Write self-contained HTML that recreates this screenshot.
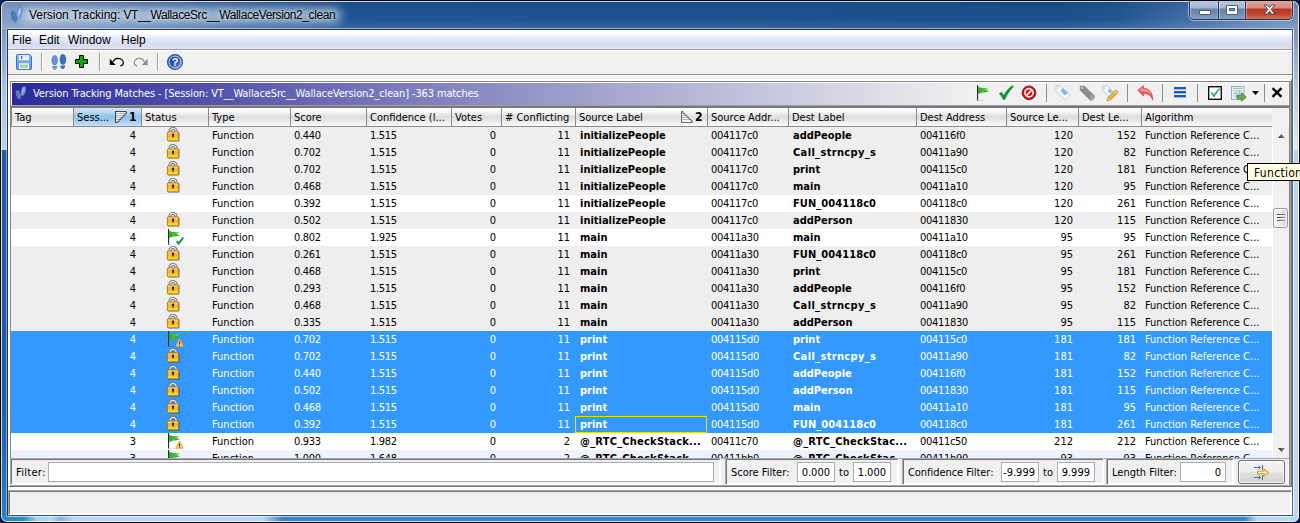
<!DOCTYPE html>
<html><head><meta charset="utf-8"><title>Version Tracking</title>
<style>
html,body{margin:0;padding:0}
body{width:1300px;height:523px;overflow:hidden;background:#0a2050;position:relative;
 font-family:"DejaVu Sans Condensed","DejaVu Sans","Liberation Sans",sans-serif;font-stretch:condensed;font-size:11px;color:#000;}
div,span,svg{position:absolute;box-sizing:border-box}
.win{left:0;top:0;width:1300px;height:523px;border-radius:7px;border:1px solid #05080f;overflow:hidden;background:#1f5aa2}
.win>div,.win>svg{margin:-1px 0 0 -1px}
.tb{left:1px;top:1px;width:1298px;height:149px;background:linear-gradient(90deg,#86a2c9 0,#7a98c4 30px,#5c83b6 130px,#34659f 250px,#1f5595 345px,#1d5391 560px,#1b508d 1060px,#245893 1120px,#4572ab 1200px,#698bb9 1260px,#7192bd 1298px)}
.tbv{left:1px;top:1px;width:1298px;height:28px;background:linear-gradient(rgba(10,30,70,.18) 0,rgba(10,30,70,.05) 8px,rgba(255,255,255,0) 18px,rgba(255,255,255,.12) 28px)}
.fl2{left:1px;top:150px;width:7px;height:372px;background:linear-gradient(#1f5aa2 0,#1f5ca6 250px,#2a7fbd 372px)}
.fl1{left:1px;top:29px;width:7px;height:121px;background:linear-gradient(#7d9bc5 0,#a9c2e2 60px,#bcd0ea 121px)}
.fr1{left:1292px;top:29px;width:7px;height:121px;background:linear-gradient(#7393be 0,#b5cbe8 60px,#dce9f8 121px)}
.fr2{left:1292px;top:150px;width:7px;height:372px;background:linear-gradient(#b0d2f8 0,#b6d8fc 200px)}
.frb{left:1px;top:515px;width:1298px;height:7px;background:linear-gradient(90deg,#2a8ac0 0,#2d8cc4 22px,#a8d2f8 36px,#b4d8fc 50px,#86b2e2 60px,#b4d8fc 72px,#b4d8fc 262px,#3a82cc 282px,#3a82cc 1243px,#b4d8fc 1256px,#b4d8fc 1298px)}
.hlo{left:1px;top:1px;width:1298px;height:521px;border-radius:6px;border:1px solid rgba(255,255,255,.78)}
.hli{left:6px;top:28px;width:1288px;height:489px;border-radius:2px;border:1px solid;border-color:rgba(255,255,255,.45) rgba(255,255,255,.85) rgba(255,255,255,.6) rgba(255,255,255,.45)}
.glow{left:20px;top:8px;width:322px;height:15px;border-radius:8px;background:rgba(255,255,255,.5);filter:blur(5px)}
.ttl{left:29px;top:8px;font:12px "Liberation Sans",sans-serif;white-space:nowrap;color:#000;letter-spacing:-0.28px;text-shadow:0 0 4px rgba(255,255,255,.7),0 0 8px rgba(255,255,255,.5)}
.cl{left:7px;top:29px;width:1286px;height:487px;border:1px solid;border-color:#28354d #566270 #3d4c62 #1f3354;background:#f0f0f0;overflow:hidden}
/* everything inside .ci is in page coords minus (8,30)... use wrapper that restores page coords */
.pg{left:-8px;top:-30px;width:1300px;height:523px}
.menu{left:8px;top:29px;width:1284px;height:20px;background:linear-gradient(#fff 0,#fdfdff 5px,#e4e8f6 9px,#d6dbef 17px,#dfe3f3 20px)}
.menu span{top:4px;font:12px "Liberation Sans",sans-serif;position:absolute}
.l1{left:8px;width:1284px;height:1px}
.sep2{width:1px;height:18px;top:84px;background:#8f8f8f}
.sep{width:2px;height:18px;top:53px;border-left:1px solid #a0a0a0;border-right:1px solid #fff}
.ph{left:12px;top:83px;width:1276px;height:22px;background:linear-gradient(90deg,#29299a 0,#f0f0f0 956px)}
.pht{left:33px;top:87px;color:#fff;white-space:nowrap;letter-spacing:-0.13px}
.hd{left:11px;top:108px;width:1261px;height:19px;background:linear-gradient(#fff 0,#f6f6f6 4px,#dcdcdc 9px,#eeeeee 14px,#fafafa 18px);border-bottom:1px solid #8c8c8c}
.h{top:0;height:18px;border-left:1px solid #8a8a8a;overflow:hidden}
.h .ht{left:3px;top:3px;white-space:nowrap}
.hs{background:linear-gradient(#d2e7f9 0,#b9d9f4 4px,#8ec1eb 9px,#add2f2 14px,#c6e0f7 18px)}
.sn{font-weight:bold;font-size:12px;top:2px}
.sort1{left:41px;top:3px}.sort2{left:105px;top:3px}
.tv{left:11px;top:127px;width:1261px;height:331px;background:#fff;overflow:hidden}
.row{left:0;width:1261px;height:17px}
.rg{background:#eeeeee}.rw{background:#fff}.ra{background:#edf3fe}.rs{background:#3399ff;color:#fff}
.c{top:0;height:17px;line-height:17px;padding-left:4px;white-space:nowrap;overflow:hidden}
.c.r{text-align:right;padding-right:5px;padding-left:0}
.c.b{font-weight:bold;padding-left:5px}.c.n{letter-spacing:-.3px}
.c.ctr{padding:0}.c.ctr .ic{left:27px;top:0}.c.ctr .ic.lk{left:24px}
.c.foc{border:1px solid #e2e200;line-height:15px;padding-left:4px}
.vs{left:1272px;top:127px;width:17px;height:331px;background:linear-gradient(90deg,#fff 0,#fff 1px,#f0f0f0 1px)}
.inp{background:#fff;border:1px solid #abadb3;height:20px;top:462px;line-height:18px;padding-top:1px;text-align:right;padding-right:4px}
.lbl{top:466px;line-height:14px;white-space:nowrap}
.bevl{border:1px solid;border-color:#a8a8a8 #fff #fff #a8a8a8;box-shadow:inset 1px 1px 0 #757575,inset -1px -1px 0 #fff}
.bevr{border:1px solid;border-color:#fff #757575 #757575 #fff;box-shadow:inset 1px 1px 0 #fff,inset -1px -1px 0 #a8a8a8}
.etch{border:1px solid #a0a0a0;box-shadow:inset 1px 1px 0 #fff,1px 1px 0 #fff}
</style></head><body>
<svg width="0" height="0" style="position:absolute">
 <linearGradient id="gl" x1="0" y1="0" x2="0" y2="1"><stop offset="0" stop-color="#f6c24a"/><stop offset=".5" stop-color="#f8b326"/><stop offset=".78" stop-color="#fdd421"/><stop offset="1" stop-color="#ffe326"/></linearGradient>
 <linearGradient id="gf" x1="0" y1="0" x2="1" y2="0"><stop offset="0" stop-color="#2fa521"/><stop offset=".6" stop-color="#4fc63a"/><stop offset="1" stop-color="#7fe060"/></linearGradient>
</svg>
<div class="win">
 <div class="tb"></div><div class="tbv"></div><div class="glow"></div><div class="fl1"></div><div class="fl2"></div><div class="fr1"></div><div class="fr2"></div><div class="frb"></div><div class="hlo"></div><div class="hli"></div>
 <svg style="left:9px;top:6px" width="16" height="18" viewBox="0 0 16 18"><ellipse cx="5" cy="10.300" rx="2.300" ry="5.600" transform="rotate(-16 5 10.300)" fill="#4d7cbb" stroke="#3f6fb0" stroke-width=".7"/><ellipse cx="10.300" cy="6.800" rx="2.200" ry="5.700" transform="rotate(14 10.300 6.800)" fill="#8fb2df" stroke="#5585c4" stroke-width=".9"/><ellipse cx="10.600" cy="5.800" rx=".9" ry="3.200" transform="rotate(14 10.600 5.800)" fill="#b5d0f0"/></svg>
 <div class="ttl"><span style="position:static;letter-spacing:-0.05px">Version Tracking: </span><span style="position:static;letter-spacing:-0.4px">VT__WallaceSrc__WallaceVersion2_clean</span></div>
 <!-- caption buttons -->
 <div style="left:1189px;top:0;width:104px;height:20px;border:1px solid #27344e;border-top:none;border-radius:0 0 5px 5px;overflow:hidden;box-shadow:0 0 0 1px rgba(255,255,255,.5)">
  <div style="left:0;top:0;width:29px;height:19px;background:linear-gradient(#bccbdf 0,#a3b8d2 8px,#6482a8 9px,#6f8db3 14px,#88a3c5 19px);border-right:1px solid #27344e;box-shadow:inset 1px 0 0 rgba(255,255,255,.4),inset -1px 0 0 rgba(255,255,255,.25)"></div>
  <div style="left:29px;top:0;width:27px;height:19px;background:linear-gradient(#bccbdf 0,#a3b8d2 8px,#6482a8 9px,#6f8db3 14px,#88a3c5 19px);border-right:1px solid #27344e;box-shadow:inset 1px 0 0 rgba(255,255,255,.4),inset -1px 0 0 rgba(255,255,255,.25)"></div>
  <div style="left:56px;top:0;width:46px;height:19px;background:linear-gradient(#e0aaa0 0,#d48b7f 8px,#ba3823 9px,#b93c27 13px,#cf7459 19px);box-shadow:inset 1px 0 0 rgba(255,255,255,.35),inset -1px 0 0 rgba(255,255,255,.3)"></div>
  <div style="left:9px;top:10px;width:12px;height:5px;background:#fff;border:1px solid #535e72;border-radius:1px"></div>
  <div style="left:36px;top:5px;width:12px;height:10px;background:#fff;border:1px solid #535e72;border-radius:1px"></div>
  <div style="left:39px;top:8px;width:6px;height:3px;background:#6b87ab;border:1px solid #535e72"></div>
  <svg style="left:73px;top:4px" width="13" height="12" viewBox="0 0 13 12"><path d="M1 1h3.200l2.300 2.600 2.300-2.600h3.200l-3.900 4.400 3.900 4.600h-3.200l-2.300-2.800-2.300 2.800h-3.200l3.900-4.600z" fill="#fff" stroke="#4d4a55" stroke-width="1" stroke-linejoin="round"/></svg>
 </div>
 <div class="cl"><div class="pg">
  <div class="menu"><span style="left:4px">File</span><span style="left:31px">Edit</span><span style="left:60px">Window</span><span style="left:113px">Help</span></div>
  <div class="l1" style="top:49px;background:#a0a0a0"></div>
  <div class="l1" style="top:50px;background:#fff"></div>
  <div class="l1" style="top:74px;background:#8e8e8e"></div>
  <div class="l1" style="top:75px;background:#fff"></div>
  <!-- toolbar icons -->
  <svg style="left:16px;top:54px" width="16" height="16" viewBox="0 0 16 16"><linearGradient id="gs" x1="0" y1="0" x2="0" y2="1"><stop offset="0" stop-color="#8ab4ee"/><stop offset="1" stop-color="#5e93e2"/></linearGradient><path d="M1.500 .5h12l2 2v12a1 1 0 0 1-1 1h-13a1 1 0 0 1-1-1v-13a1 1 0 0 1 1-1z" fill="url(#gs)" stroke="#3a74d0"/><rect x="2.800" y="1" width="10.200" height="5.300" fill="#e6effc"/><rect x="5" y="2" width="1.300" height="3" fill="#3d6fc0"/><rect x="3" y="9.300" width="10" height="5.700" fill="#fff"/><rect x="4" y="10.700" width="8" height="1.200" fill="#7cc05a"/><rect x="4" y="12.600" width="8" height="1.200" fill="#7cc05a"/></svg>
  <div class="sep" style="left:41px"></div>
  <svg style="left:51px;top:54px" width="16" height="16" viewBox="0 0 16 16"><ellipse cx="3.700" cy="6.200" rx="3.200" ry="5.200" fill="#6394d4"/><path d="M1.200 12h5c0 2.100-1 3.800-2.500 3.800s-2.500-1.700-2.500-3.800z" fill="#6394d4"/><ellipse cx="11.900" cy="5.400" rx="3.200" ry="5.400" fill="#3a6db6"/><path d="M9.400 11.400h4.800c0 2-1 3.600-2.400 3.600s-2.400-1.600-2.400-3.600z" fill="#3a6db6"/></svg>
  <svg style="left:74px;top:54px" width="16" height="16" viewBox="0 0 16 16"><path d="M5.500 1.500h4v4h4v4h-4v4h-4v-4h-4v-4h4z" fill="#12a312" stroke="#000" stroke-width="1" stroke-linejoin="miter"/></svg>
  <div class="sep" style="left:99px"></div>
  <svg style="left:109px;top:54px" width="16" height="16" viewBox="0 0 16 16"><path d="M4 7.800c1-2 3-3.600 5.300-3.400 3 .3 5.200 2.300 5 4.600-.1 1.500-1.200 2.600-2.800 3" fill="none" stroke="#000" stroke-width="1.300"/><path d="M.8 4.800v6.200h5.900z" fill="#000"/></svg>
  <svg style="left:133px;top:54px" width="16" height="16" viewBox="0 0 16 16"><path d="M11.500 7.800c-1-2-3-3.600-5.300-3.400-3 .3-5.200 2.300-5 4.600.1 1.500 1.200 2.600 2.800 3" fill="none" stroke="#8a8a8a" stroke-width="1.300"/><path d="M14.700 4.800v6.200h-5.900z" fill="#8a8a8a"/></svg>
  <div class="sep" style="left:157px"></div>
  <svg style="left:167px;top:54px" width="16" height="16" viewBox="0 0 16 16"><linearGradient id="gh" x1="0" y1="0" x2="1" y2="1"><stop offset="0" stop-color="#163f8c"/><stop offset=".55" stop-color="#2c5cab"/><stop offset="1" stop-color="#6f9bd8"/></linearGradient><circle cx="8" cy="8" r="7.600" fill="url(#gh)" stroke="#1d4690" stroke-width=".8"/><circle cx="8" cy="8" r="6" fill="none" stroke="#e3ecf9" stroke-width=".9"/><text x="8" y="12" font-family="Liberation Sans,sans-serif" font-weight="bold" font-size="11" text-anchor="middle" fill="#fff">?</text></svg>

  <!-- provider panel -->
  <div class="bevr" style="left:8px;top:79px;width:1284px;height:408px"></div>
  <div style="left:10px;top:81px;width:1280px;height:404px;border:1px solid #828282;border-bottom:none;box-shadow:inset 1px 1px 0 #fff,inset -1px 0 0 #fff"></div>
  <div class="ph"></div>
  <svg style="left:14px;top:85px" width="14" height="16" viewBox="0 0 16 18"><ellipse cx="5" cy="10.800" rx="2.300" ry="5.200" transform="rotate(-16 5 10.800)" fill="#5e80b4" stroke="#5374aa" stroke-width=".7"/><ellipse cx="10.600" cy="6.800" rx="2.200" ry="5.400" transform="rotate(14 10.600 6.800)" fill="#7d9dcb" stroke="#6586ba" stroke-width=".9"/><ellipse cx="10.900" cy="5.800" rx=".8" ry="3" transform="rotate(14 10.900 5.800)" fill="#9ab6dc"/></svg>
  <div class="pht">Version Tracking Matches - [Session: VT__WallaceSrc__WallaceVersion2_clean] -363 matches</div>

  <svg style="left:977px;top:85px" width="16" height="16" viewBox="0 0 16 16"><rect x="0" y="0" width="1.100" height="15.500" fill="#2a2a2a"/><path d="M1.100 1.800C4.500 3.200 8 3.300 12 3.200L8.300 5.400 12 6.600C8 7.300 4.500 7.800 1.100 9z" fill="url(#gf)"/><path d="M7 5.900l2.300-.9 2.700 1.600c-1.800.3-3.400.5-5 .8z" fill="#1e8a1a" opacity=".55"/><rect x="1.100" y="15" width="7" height=".6" fill="rgba(0,0,0,.18)"/></svg>
  <svg style="left:998px;top:85px" width="17" height="16" viewBox="0 0 17 16"><path d="M1.300 8.600l2.200-1.300 2.200 3.200c2.300-4 5-7.300 8.600-10l1.200 1.200c-3.800 3.600-6.400 7.600-8.800 12.800h-1.500c-1-2.300-2.200-4.200-3.900-5.900z" fill="#089a2e" stroke="#067a24" stroke-width=".5"/></svg>
  <svg style="left:1021px;top:85px" width="16" height="16" viewBox="0 0 16 16"><circle cx="8" cy="7.800" r="6.900" fill="#c01818" stroke="#8e0c0c" stroke-width=".8"/><circle cx="8" cy="7.800" r="4.100" fill="none" stroke="#f4dede" stroke-width="1.700"/><path d="M5 10.800L11 4.800" stroke="#f4dede" stroke-width="1.700"/></svg>
  <div class="sep2" style="left:1046px"></div>
  <svg style="left:1055px;top:85px" width="16" height="16" viewBox="0 0 16 16"><path d="M1 .8h4.200l9.600 9.200-4.600 5-9.200-9.600z" fill="#fdfdfd" stroke="#b9bfc9" stroke-width=".9"/><path d="M5.300 5.800l3-2.600 4.600 4.600-3 2.800z" fill="#79b9f0"/><circle cx="3" cy="3" r=".9" fill="#c8ccd4"/></svg>
  <svg style="left:1079px;top:85px" width="17" height="17" viewBox="0 0 17 17"><path d="M.8 .8h4.600l10.200 9.600c.6 2.400-1.400 5-4.400 5.200l-10.400-10.400z" fill="#8d8d8d"/><path d="M11 10.500c2-.5 3.800.2 4.600 1.200.2 2-1.600 3.800-4.400 3.900z" fill="#a2a2a2"/><circle cx="3" cy="3" r="1" fill="#e0e0e0"/></svg>
  <svg style="left:1102px;top:85px" width="17" height="17" viewBox="0 0 17 17"><path d="M1 .8h4.200l7 6.800-4.600 5-6.600-7.200z" fill="#fdfdfd" stroke="#b9bfc9" stroke-width=".9"/><path d="M5.300 5.800l2.600-2.300 3 3-2.600 2.600z" fill="#8cc4f2"/><circle cx="3" cy="3" r=".9" fill="#c8ccd4"/><path d="M5 15.800l1.200-3.600 7.600-7.200 2.400 2.400-7.600 7.300z" fill="#f2b13a" stroke="#b87414" stroke-width=".7"/><path d="M5 15.800l1.200-3.600 2.400 2.500z" fill="#f6dcb0" stroke="#b87414" stroke-width=".5"/><path d="M12.600 6l2.300 2.300" stroke="#e8e0d8" stroke-width="1"/></svg>
  <div class="sep2" style="left:1127px"></div>
  <svg style="left:1137px;top:85px" width="17" height="16" viewBox="0 0 17 16"><path d="M.8 5.200L6.600 .6v2.600c5 .2 9.400 4 9 12-1.400-4.800-4.600-6.700-9-6.700v2.700z" fill="#f05a5a" stroke="#d03434" stroke-width=".6"/><path d="M2.200 5.200l3.600-2.800v1.700c3.600.1 6.800 1.400 8.600 5.400-2-2.600-5-3.100-8.600-3.100z" fill="#fbb" opacity=".7"/></svg>
  <div class="sep2" style="left:1162px"></div>
  <div style="left:1174px;top:87px;width:12px;height:2px;background:#1c5cac;box-shadow:0 4px 0 #1c5cac,0 8px 0 #1c5cac"></div>
  <div style="left:1174px;top:89px;width:12px;height:1px;background:#9bbbe0;box-shadow:0 4px 0 #9bbbe0,0 8px 0 #9bbbe0"></div>
  <div class="sep2" style="left:1197px"></div>
  <svg style="left:1208px;top:86px" width="14" height="14" viewBox="0 0 14 14"><rect x=".7" y=".7" width="12.600" height="12.600" fill="#fff" stroke="#111" stroke-width="1.400"/><path d="M2.600 7l1.300-1 2 2.400c1.500-2.500 3.400-4.500 5.800-6.200l.8.900c-2.600 2.300-4.400 4.800-6 8h-1c-.7-1.600-1.600-2.900-2.900-4.100z" fill="#1aa37a"/></svg>
  <svg style="left:1231px;top:86px" width="16" height="16" viewBox="0 0 16 16"><rect x=".5" y=".5" width="12.500" height="13" fill="#eef4fc" stroke="#8fb0de"/><rect x="2" y="1.800" width="9.500" height="1.200" fill="#9ccf7a"/><path d="M2 5h9.500M2 7.500h9.500M2 10h5M5 4v8M8.500 4v5" stroke="#9bb8e0" stroke-width=".9" fill="none"/><path d="M6 9.300h4.300v-2.500l5 4.200-5 4.200v-2.500h-4.300z" fill="#6eaa3c" stroke="#3f7a1a" stroke-width=".7"/></svg>
  <svg style="left:1252px;top:91px" width="7" height="4" viewBox="0 0 7 4"><path d="M0 0h7l-3.500 4z" fill="#000"/></svg>
  <div class="sep2" style="left:1264px"></div>
  <svg style="left:1271px;top:87px" width="12" height="11" viewBox="0 0 12 11"><path d="M1.500 1.200l9 8.600M10.500 1.200l-9 8.600" stroke="#000" stroke-width="2.300"/></svg>

  <div style="left:11px;top:105px;width:1278px;height:3px;background:linear-gradient(#a0a0a0 0,#a0a0a0 1px,#787878 1px,#787878 3px)"></div>
  <div class="hd">
<div class="h" style="left:0px;width:62px"><span class="ht">Tag</span></div>
<div class="h hs" style="left:62px;width:68px"><span class="ht">Sess...</span><svg class="sort1" width="13" height="13" viewBox="0 0 13 13"><path d="M.5 .5H11.500V2.500H10V4.500H8V6.500H6V8.500H4V10.500H2.500V11.500H.5Z" fill="#fafafa" stroke="#4a4a4a" stroke-width="1"/><path d="M1 2.500H10M1 4.500H8M1 6.500H6M1 8.500H4" stroke="#b0b0b0" stroke-width="1"/><path d="M.5 .5V11.500" stroke="#3a3a3a"/></svg><span class="sn" style="left:55px">1</span></div>
<div class="h" style="left:130px;width:67px"><span class="ht">Status</span></div>
<div class="h" style="left:197px;width:82px"><span class="ht">Type</span></div>
<div class="h" style="left:279px;width:76px"><span class="ht">Score</span></div>
<div class="h" style="left:355px;width:85px"><span class="ht">Confidence (l...</span></div>
<div class="h" style="left:440px;width:50px"><span class="ht">Votes</span></div>
<div class="h" style="left:490px;width:74px"><span class="ht"># Conflicting</span></div>
<div class="h" style="left:564px;width:132px"><span class="ht">Source Label</span><svg class="sort2" width="13" height="13" viewBox="0 0 13 13"><path d="M.5 .5H2V2.500H4V4.500H6V6.500H8V8.500H10V10H11.500V11.500H.5Z" fill="#fafafa" stroke="#6a6a6a" stroke-width="1"/><path d="M1 2.500H2M1 4.500H4M1 6.500H6M1 8.500H8" stroke="#b8b8b8" stroke-width="1"/></svg><span class="sn" style="left:119px">2</span></div>
<div class="h" style="left:696px;width:81px"><span class="ht">Source Addr...</span></div>
<div class="h" style="left:777px;width:128px"><span class="ht">Dest Label</span></div>
<div class="h" style="left:905px;width:90px"><span class="ht">Dest Address</span></div>
<div class="h" style="left:995px;width:72px"><span class="ht">Source Le...</span></div>
<div class="h" style="left:1067px;width:63px"><span class="ht">Dest Le...</span></div>
<div class="h" style="left:1130px;width:131px"><span class="ht">Algorithm</span></div>
  </div>
  <div class="tv">
<div class="row rg" style="top:0px"><div class="c r" style="left:62px;width:68px">4</div><div class="c ctr" style="left:130px;width:67px"><svg class="ic lk" width="16" height="16" viewBox="0 0 16 16"><rect x="2.800" y="5.300" width="12" height="9.500" rx="1" fill="rgba(0,0,0,.28)"/><path d="M4.900 6V4.600a3.150 3.150 0 0 1 6.300 0V6" fill="none" stroke="#6e6e6e" stroke-width="3"/><path d="M4.900 6V4.600a3.150 3.150 0 0 1 6.300 0V6" fill="none" stroke="#ececec" stroke-width="1.300"/><rect x="2.400" y="4.900" width="11.200" height="8.900" rx=".8" fill="url(#gl)" stroke="#a8690f" stroke-width=".8"/><rect x="3.200" y="5.600" width="9.600" height="1" fill="rgba(255,255,255,.35)"/><circle cx="8" cy="7.700" r="1.150" fill="#1b1b33"/><rect x="7.300" y="8" width="1.400" height="2.500" rx=".5" fill="#1b1b33"/></svg></div><div class="c " style="left:197px;width:82px">Function</div><div class="c n" style="left:279px;width:76px">0.440</div><div class="c n" style="left:355px;width:85px">1.515</div><div class="c r" style="left:440px;width:50px">0</div><div class="c r" style="left:490px;width:74px">11</div><div class="c b" style="left:564px;width:132px">initializePeople</div><div class="c n" style="left:696px;width:81px">004117c0</div><div class="c b" style="left:777px;width:128px">addPeople</div><div class="c n" style="left:905px;width:90px">004116f0</div><div class="c r" style="left:995px;width:72px">120</div><div class="c r" style="left:1067px;width:63px">152</div><div class="c " style="left:1130px;width:131px">Function Reference C...</div></div>
<div class="row rg" style="top:17px"><div class="c r" style="left:62px;width:68px">4</div><div class="c ctr" style="left:130px;width:67px"><svg class="ic lk" width="16" height="16" viewBox="0 0 16 16"><rect x="2.800" y="5.300" width="12" height="9.500" rx="1" fill="rgba(0,0,0,.28)"/><path d="M4.900 6V4.600a3.150 3.150 0 0 1 6.300 0V6" fill="none" stroke="#6e6e6e" stroke-width="3"/><path d="M4.900 6V4.600a3.150 3.150 0 0 1 6.300 0V6" fill="none" stroke="#ececec" stroke-width="1.300"/><rect x="2.400" y="4.900" width="11.200" height="8.900" rx=".8" fill="url(#gl)" stroke="#a8690f" stroke-width=".8"/><rect x="3.200" y="5.600" width="9.600" height="1" fill="rgba(255,255,255,.35)"/><circle cx="8" cy="7.700" r="1.150" fill="#1b1b33"/><rect x="7.300" y="8" width="1.400" height="2.500" rx=".5" fill="#1b1b33"/></svg></div><div class="c " style="left:197px;width:82px">Function</div><div class="c n" style="left:279px;width:76px">0.702</div><div class="c n" style="left:355px;width:85px">1.515</div><div class="c r" style="left:440px;width:50px">0</div><div class="c r" style="left:490px;width:74px">11</div><div class="c b" style="left:564px;width:132px">initializePeople</div><div class="c n" style="left:696px;width:81px">004117c0</div><div class="c b" style="left:777px;width:128px"><span style="position:static;letter-spacing:0.35px">Call_strncpy_s</span></div><div class="c n" style="left:905px;width:90px">00411a90</div><div class="c r" style="left:995px;width:72px">120</div><div class="c r" style="left:1067px;width:63px">82</div><div class="c " style="left:1130px;width:131px">Function Reference C...</div></div>
<div class="row rg" style="top:34px"><div class="c r" style="left:62px;width:68px">4</div><div class="c ctr" style="left:130px;width:67px"><svg class="ic lk" width="16" height="16" viewBox="0 0 16 16"><rect x="2.800" y="5.300" width="12" height="9.500" rx="1" fill="rgba(0,0,0,.28)"/><path d="M4.900 6V4.600a3.150 3.150 0 0 1 6.300 0V6" fill="none" stroke="#6e6e6e" stroke-width="3"/><path d="M4.900 6V4.600a3.150 3.150 0 0 1 6.300 0V6" fill="none" stroke="#ececec" stroke-width="1.300"/><rect x="2.400" y="4.900" width="11.200" height="8.900" rx=".8" fill="url(#gl)" stroke="#a8690f" stroke-width=".8"/><rect x="3.200" y="5.600" width="9.600" height="1" fill="rgba(255,255,255,.35)"/><circle cx="8" cy="7.700" r="1.150" fill="#1b1b33"/><rect x="7.300" y="8" width="1.400" height="2.500" rx=".5" fill="#1b1b33"/></svg></div><div class="c " style="left:197px;width:82px">Function</div><div class="c n" style="left:279px;width:76px">0.702</div><div class="c n" style="left:355px;width:85px">1.515</div><div class="c r" style="left:440px;width:50px">0</div><div class="c r" style="left:490px;width:74px">11</div><div class="c b" style="left:564px;width:132px">initializePeople</div><div class="c n" style="left:696px;width:81px">004117c0</div><div class="c b" style="left:777px;width:128px">print</div><div class="c n" style="left:905px;width:90px">004115c0</div><div class="c r" style="left:995px;width:72px">120</div><div class="c r" style="left:1067px;width:63px">181</div><div class="c " style="left:1130px;width:131px">Function Reference C...</div></div>
<div class="row rg" style="top:51px"><div class="c r" style="left:62px;width:68px">4</div><div class="c ctr" style="left:130px;width:67px"><svg class="ic lk" width="16" height="16" viewBox="0 0 16 16"><rect x="2.800" y="5.300" width="12" height="9.500" rx="1" fill="rgba(0,0,0,.28)"/><path d="M4.900 6V4.600a3.150 3.150 0 0 1 6.300 0V6" fill="none" stroke="#6e6e6e" stroke-width="3"/><path d="M4.900 6V4.600a3.150 3.150 0 0 1 6.300 0V6" fill="none" stroke="#ececec" stroke-width="1.300"/><rect x="2.400" y="4.900" width="11.200" height="8.900" rx=".8" fill="url(#gl)" stroke="#a8690f" stroke-width=".8"/><rect x="3.200" y="5.600" width="9.600" height="1" fill="rgba(255,255,255,.35)"/><circle cx="8" cy="7.700" r="1.150" fill="#1b1b33"/><rect x="7.300" y="8" width="1.400" height="2.500" rx=".5" fill="#1b1b33"/></svg></div><div class="c " style="left:197px;width:82px">Function</div><div class="c n" style="left:279px;width:76px">0.468</div><div class="c n" style="left:355px;width:85px">1.515</div><div class="c r" style="left:440px;width:50px">0</div><div class="c r" style="left:490px;width:74px">11</div><div class="c b" style="left:564px;width:132px">initializePeople</div><div class="c n" style="left:696px;width:81px">004117c0</div><div class="c b" style="left:777px;width:128px">main</div><div class="c n" style="left:905px;width:90px">00411a10</div><div class="c r" style="left:995px;width:72px">120</div><div class="c r" style="left:1067px;width:63px">95</div><div class="c " style="left:1130px;width:131px">Function Reference C...</div></div>
<div class="row rw" style="top:68px"><div class="c r" style="left:62px;width:68px">4</div><div class="c ctr" style="left:130px;width:67px"></div><div class="c " style="left:197px;width:82px">Function</div><div class="c n" style="left:279px;width:76px">0.392</div><div class="c n" style="left:355px;width:85px">1.515</div><div class="c r" style="left:440px;width:50px">0</div><div class="c r" style="left:490px;width:74px">11</div><div class="c b" style="left:564px;width:132px">initializePeople</div><div class="c n" style="left:696px;width:81px">004117c0</div><div class="c b" style="left:777px;width:128px"><span style="position:static;letter-spacing:0.08px">FUN_004118c0</span></div><div class="c n" style="left:905px;width:90px">004118c0</div><div class="c r" style="left:995px;width:72px">120</div><div class="c r" style="left:1067px;width:63px">261</div><div class="c " style="left:1130px;width:131px">Function Reference C...</div></div>
<div class="row rg" style="top:85px"><div class="c r" style="left:62px;width:68px">4</div><div class="c ctr" style="left:130px;width:67px"><svg class="ic lk" width="16" height="16" viewBox="0 0 16 16"><rect x="2.800" y="5.300" width="12" height="9.500" rx="1" fill="rgba(0,0,0,.28)"/><path d="M4.900 6V4.600a3.150 3.150 0 0 1 6.300 0V6" fill="none" stroke="#6e6e6e" stroke-width="3"/><path d="M4.900 6V4.600a3.150 3.150 0 0 1 6.300 0V6" fill="none" stroke="#ececec" stroke-width="1.300"/><rect x="2.400" y="4.900" width="11.200" height="8.900" rx=".8" fill="url(#gl)" stroke="#a8690f" stroke-width=".8"/><rect x="3.200" y="5.600" width="9.600" height="1" fill="rgba(255,255,255,.35)"/><circle cx="8" cy="7.700" r="1.150" fill="#1b1b33"/><rect x="7.300" y="8" width="1.400" height="2.500" rx=".5" fill="#1b1b33"/></svg></div><div class="c " style="left:197px;width:82px">Function</div><div class="c n" style="left:279px;width:76px">0.502</div><div class="c n" style="left:355px;width:85px">1.515</div><div class="c r" style="left:440px;width:50px">0</div><div class="c r" style="left:490px;width:74px">11</div><div class="c b" style="left:564px;width:132px">initializePeople</div><div class="c n" style="left:696px;width:81px">004117c0</div><div class="c b" style="left:777px;width:128px">addPerson</div><div class="c n" style="left:905px;width:90px">00411830</div><div class="c r" style="left:995px;width:72px">120</div><div class="c r" style="left:1067px;width:63px">115</div><div class="c " style="left:1130px;width:131px">Function Reference C...</div></div>
<div class="row rw" style="top:102px"><div class="c r" style="left:62px;width:68px">4</div><div class="c ctr" style="left:130px;width:67px"><svg class="ic" width="16" height="16" viewBox="0 0 16 16"><rect x="0" y="0" width="1.100" height="15.500" fill="#2a2a2a"/><path d="M1.100 1.800C4.500 3.200 8 3.300 12 3.200L8.300 5.400 12 6.600C8 7.300 4.500 7.800 1.100 9z" fill="url(#gf)"/><path d="M7 5.900l2.300-.9 2.700 1.600c-1.800.3-3.400.5-5 .8z" fill="#1e8a1a" opacity=".55"/><rect x="1.100" y="15" width="7" height=".6" fill="rgba(0,0,0,.18)"/><path d="M8.600 12.200l2 2.500 4.700-6" fill="none" stroke="#0a9a2e" stroke-width="1.900"/></svg></div><div class="c " style="left:197px;width:82px">Function</div><div class="c n" style="left:279px;width:76px">0.802</div><div class="c n" style="left:355px;width:85px">1.925</div><div class="c r" style="left:440px;width:50px">0</div><div class="c r" style="left:490px;width:74px">11</div><div class="c b" style="left:564px;width:132px">main</div><div class="c n" style="left:696px;width:81px">00411a30</div><div class="c b" style="left:777px;width:128px">main</div><div class="c n" style="left:905px;width:90px">00411a10</div><div class="c r" style="left:995px;width:72px">95</div><div class="c r" style="left:1067px;width:63px">95</div><div class="c " style="left:1130px;width:131px">Function Reference C...</div></div>
<div class="row rg" style="top:119px"><div class="c r" style="left:62px;width:68px">4</div><div class="c ctr" style="left:130px;width:67px"><svg class="ic lk" width="16" height="16" viewBox="0 0 16 16"><rect x="2.800" y="5.300" width="12" height="9.500" rx="1" fill="rgba(0,0,0,.28)"/><path d="M4.900 6V4.600a3.150 3.150 0 0 1 6.300 0V6" fill="none" stroke="#6e6e6e" stroke-width="3"/><path d="M4.900 6V4.600a3.150 3.150 0 0 1 6.300 0V6" fill="none" stroke="#ececec" stroke-width="1.300"/><rect x="2.400" y="4.900" width="11.200" height="8.900" rx=".8" fill="url(#gl)" stroke="#a8690f" stroke-width=".8"/><rect x="3.200" y="5.600" width="9.600" height="1" fill="rgba(255,255,255,.35)"/><circle cx="8" cy="7.700" r="1.150" fill="#1b1b33"/><rect x="7.300" y="8" width="1.400" height="2.500" rx=".5" fill="#1b1b33"/></svg></div><div class="c " style="left:197px;width:82px">Function</div><div class="c n" style="left:279px;width:76px">0.261</div><div class="c n" style="left:355px;width:85px">1.515</div><div class="c r" style="left:440px;width:50px">0</div><div class="c r" style="left:490px;width:74px">11</div><div class="c b" style="left:564px;width:132px">main</div><div class="c n" style="left:696px;width:81px">00411a30</div><div class="c b" style="left:777px;width:128px"><span style="position:static;letter-spacing:0.08px">FUN_004118c0</span></div><div class="c n" style="left:905px;width:90px">004118c0</div><div class="c r" style="left:995px;width:72px">95</div><div class="c r" style="left:1067px;width:63px">261</div><div class="c " style="left:1130px;width:131px">Function Reference C...</div></div>
<div class="row rg" style="top:136px"><div class="c r" style="left:62px;width:68px">4</div><div class="c ctr" style="left:130px;width:67px"><svg class="ic lk" width="16" height="16" viewBox="0 0 16 16"><rect x="2.800" y="5.300" width="12" height="9.500" rx="1" fill="rgba(0,0,0,.28)"/><path d="M4.900 6V4.600a3.150 3.150 0 0 1 6.300 0V6" fill="none" stroke="#6e6e6e" stroke-width="3"/><path d="M4.900 6V4.600a3.150 3.150 0 0 1 6.300 0V6" fill="none" stroke="#ececec" stroke-width="1.300"/><rect x="2.400" y="4.900" width="11.200" height="8.900" rx=".8" fill="url(#gl)" stroke="#a8690f" stroke-width=".8"/><rect x="3.200" y="5.600" width="9.600" height="1" fill="rgba(255,255,255,.35)"/><circle cx="8" cy="7.700" r="1.150" fill="#1b1b33"/><rect x="7.300" y="8" width="1.400" height="2.500" rx=".5" fill="#1b1b33"/></svg></div><div class="c " style="left:197px;width:82px">Function</div><div class="c n" style="left:279px;width:76px">0.468</div><div class="c n" style="left:355px;width:85px">1.515</div><div class="c r" style="left:440px;width:50px">0</div><div class="c r" style="left:490px;width:74px">11</div><div class="c b" style="left:564px;width:132px">main</div><div class="c n" style="left:696px;width:81px">00411a30</div><div class="c b" style="left:777px;width:128px">print</div><div class="c n" style="left:905px;width:90px">004115c0</div><div class="c r" style="left:995px;width:72px">95</div><div class="c r" style="left:1067px;width:63px">181</div><div class="c " style="left:1130px;width:131px">Function Reference C...</div></div>
<div class="row rg" style="top:153px"><div class="c r" style="left:62px;width:68px">4</div><div class="c ctr" style="left:130px;width:67px"><svg class="ic lk" width="16" height="16" viewBox="0 0 16 16"><rect x="2.800" y="5.300" width="12" height="9.500" rx="1" fill="rgba(0,0,0,.28)"/><path d="M4.900 6V4.600a3.150 3.150 0 0 1 6.300 0V6" fill="none" stroke="#6e6e6e" stroke-width="3"/><path d="M4.900 6V4.600a3.150 3.150 0 0 1 6.300 0V6" fill="none" stroke="#ececec" stroke-width="1.300"/><rect x="2.400" y="4.900" width="11.200" height="8.900" rx=".8" fill="url(#gl)" stroke="#a8690f" stroke-width=".8"/><rect x="3.200" y="5.600" width="9.600" height="1" fill="rgba(255,255,255,.35)"/><circle cx="8" cy="7.700" r="1.150" fill="#1b1b33"/><rect x="7.300" y="8" width="1.400" height="2.500" rx=".5" fill="#1b1b33"/></svg></div><div class="c " style="left:197px;width:82px">Function</div><div class="c n" style="left:279px;width:76px">0.293</div><div class="c n" style="left:355px;width:85px">1.515</div><div class="c r" style="left:440px;width:50px">0</div><div class="c r" style="left:490px;width:74px">11</div><div class="c b" style="left:564px;width:132px">main</div><div class="c n" style="left:696px;width:81px">00411a30</div><div class="c b" style="left:777px;width:128px">addPeople</div><div class="c n" style="left:905px;width:90px">004116f0</div><div class="c r" style="left:995px;width:72px">95</div><div class="c r" style="left:1067px;width:63px">152</div><div class="c " style="left:1130px;width:131px">Function Reference C...</div></div>
<div class="row rg" style="top:170px"><div class="c r" style="left:62px;width:68px">4</div><div class="c ctr" style="left:130px;width:67px"><svg class="ic lk" width="16" height="16" viewBox="0 0 16 16"><rect x="2.800" y="5.300" width="12" height="9.500" rx="1" fill="rgba(0,0,0,.28)"/><path d="M4.900 6V4.600a3.150 3.150 0 0 1 6.300 0V6" fill="none" stroke="#6e6e6e" stroke-width="3"/><path d="M4.900 6V4.600a3.150 3.150 0 0 1 6.300 0V6" fill="none" stroke="#ececec" stroke-width="1.300"/><rect x="2.400" y="4.900" width="11.200" height="8.900" rx=".8" fill="url(#gl)" stroke="#a8690f" stroke-width=".8"/><rect x="3.200" y="5.600" width="9.600" height="1" fill="rgba(255,255,255,.35)"/><circle cx="8" cy="7.700" r="1.150" fill="#1b1b33"/><rect x="7.300" y="8" width="1.400" height="2.500" rx=".5" fill="#1b1b33"/></svg></div><div class="c " style="left:197px;width:82px">Function</div><div class="c n" style="left:279px;width:76px">0.468</div><div class="c n" style="left:355px;width:85px">1.515</div><div class="c r" style="left:440px;width:50px">0</div><div class="c r" style="left:490px;width:74px">11</div><div class="c b" style="left:564px;width:132px">main</div><div class="c n" style="left:696px;width:81px">00411a30</div><div class="c b" style="left:777px;width:128px"><span style="position:static;letter-spacing:0.35px">Call_strncpy_s</span></div><div class="c n" style="left:905px;width:90px">00411a90</div><div class="c r" style="left:995px;width:72px">95</div><div class="c r" style="left:1067px;width:63px">82</div><div class="c " style="left:1130px;width:131px">Function Reference C...</div></div>
<div class="row rg" style="top:187px"><div class="c r" style="left:62px;width:68px">4</div><div class="c ctr" style="left:130px;width:67px"><svg class="ic lk" width="16" height="16" viewBox="0 0 16 16"><rect x="2.800" y="5.300" width="12" height="9.500" rx="1" fill="rgba(0,0,0,.28)"/><path d="M4.900 6V4.600a3.150 3.150 0 0 1 6.300 0V6" fill="none" stroke="#6e6e6e" stroke-width="3"/><path d="M4.900 6V4.600a3.150 3.150 0 0 1 6.300 0V6" fill="none" stroke="#ececec" stroke-width="1.300"/><rect x="2.400" y="4.900" width="11.200" height="8.900" rx=".8" fill="url(#gl)" stroke="#a8690f" stroke-width=".8"/><rect x="3.200" y="5.600" width="9.600" height="1" fill="rgba(255,255,255,.35)"/><circle cx="8" cy="7.700" r="1.150" fill="#1b1b33"/><rect x="7.300" y="8" width="1.400" height="2.500" rx=".5" fill="#1b1b33"/></svg></div><div class="c " style="left:197px;width:82px">Function</div><div class="c n" style="left:279px;width:76px">0.335</div><div class="c n" style="left:355px;width:85px">1.515</div><div class="c r" style="left:440px;width:50px">0</div><div class="c r" style="left:490px;width:74px">11</div><div class="c b" style="left:564px;width:132px">main</div><div class="c n" style="left:696px;width:81px">00411a30</div><div class="c b" style="left:777px;width:128px">addPerson</div><div class="c n" style="left:905px;width:90px">00411830</div><div class="c r" style="left:995px;width:72px">95</div><div class="c r" style="left:1067px;width:63px">115</div><div class="c " style="left:1130px;width:131px">Function Reference C...</div></div>
<div class="row rs" style="top:204px"><div class="c r" style="left:62px;width:68px">4</div><div class="c ctr" style="left:130px;width:67px"><svg class="ic" width="16" height="16" viewBox="0 0 16 16"><rect x="0" y="0" width="1.100" height="15.500" fill="#2a2a2a"/><path d="M1.100 1.800C4.500 3.200 8 3.300 12 3.200L8.300 5.400 12 6.600C8 7.300 4.500 7.800 1.100 9z" fill="url(#gf)"/><path d="M7 5.900l2.300-.9 2.700 1.600c-1.800.3-3.400.5-5 .8z" fill="#1e8a1a" opacity=".55"/><rect x="1.100" y="15" width="7" height=".6" fill="rgba(0,0,0,.18)"/><path d="M11.500 8.200c.4 0 .6.200.8.600l2.800 5.800c.2.500 0 .9-.6.900h-6c-.6 0-.8-.4-.6-.9l2.800-5.800c.2-.4.400-.6.800-.6z" fill="#f6b545" stroke="#e09a28" stroke-width=".5"/><path d="M11.500 9.400l2.300 5h-4.600z" fill="#fbd58a"/><rect x="11" y="10.400" width="1" height="2.600" fill="#4a2a00"/><rect x="11" y="13.600" width="1" height="1.100" fill="#4a2a00"/></svg></div><div class="c " style="left:197px;width:82px">Function</div><div class="c n" style="left:279px;width:76px">0.702</div><div class="c n" style="left:355px;width:85px">1.515</div><div class="c r" style="left:440px;width:50px">0</div><div class="c r" style="left:490px;width:74px">11</div><div class="c b" style="left:564px;width:132px">print</div><div class="c n" style="left:696px;width:81px">004115d0</div><div class="c b" style="left:777px;width:128px">print</div><div class="c n" style="left:905px;width:90px">004115c0</div><div class="c r" style="left:995px;width:72px">181</div><div class="c r" style="left:1067px;width:63px">181</div><div class="c " style="left:1130px;width:131px">Function Reference C...</div></div>
<div class="row rs" style="top:221px"><div class="c r" style="left:62px;width:68px">4</div><div class="c ctr" style="left:130px;width:67px"><svg class="ic lk" width="16" height="16" viewBox="0 0 16 16"><rect x="2.800" y="5.300" width="12" height="9.500" rx="1" fill="rgba(0,0,0,.28)"/><path d="M4.900 6V4.600a3.150 3.150 0 0 1 6.300 0V6" fill="none" stroke="#6e6e6e" stroke-width="3"/><path d="M4.900 6V4.600a3.150 3.150 0 0 1 6.300 0V6" fill="none" stroke="#ececec" stroke-width="1.300"/><rect x="2.400" y="4.900" width="11.200" height="8.900" rx=".8" fill="url(#gl)" stroke="#a8690f" stroke-width=".8"/><rect x="3.200" y="5.600" width="9.600" height="1" fill="rgba(255,255,255,.35)"/><circle cx="8" cy="7.700" r="1.150" fill="#1b1b33"/><rect x="7.300" y="8" width="1.400" height="2.500" rx=".5" fill="#1b1b33"/></svg></div><div class="c " style="left:197px;width:82px">Function</div><div class="c n" style="left:279px;width:76px">0.702</div><div class="c n" style="left:355px;width:85px">1.515</div><div class="c r" style="left:440px;width:50px">0</div><div class="c r" style="left:490px;width:74px">11</div><div class="c b" style="left:564px;width:132px">print</div><div class="c n" style="left:696px;width:81px">004115d0</div><div class="c b" style="left:777px;width:128px"><span style="position:static;letter-spacing:0.35px">Call_strncpy_s</span></div><div class="c n" style="left:905px;width:90px">00411a90</div><div class="c r" style="left:995px;width:72px">181</div><div class="c r" style="left:1067px;width:63px">82</div><div class="c " style="left:1130px;width:131px">Function Reference C...</div></div>
<div class="row rs" style="top:238px"><div class="c r" style="left:62px;width:68px">4</div><div class="c ctr" style="left:130px;width:67px"><svg class="ic lk" width="16" height="16" viewBox="0 0 16 16"><rect x="2.800" y="5.300" width="12" height="9.500" rx="1" fill="rgba(0,0,0,.28)"/><path d="M4.900 6V4.600a3.150 3.150 0 0 1 6.300 0V6" fill="none" stroke="#6e6e6e" stroke-width="3"/><path d="M4.900 6V4.600a3.150 3.150 0 0 1 6.300 0V6" fill="none" stroke="#ececec" stroke-width="1.300"/><rect x="2.400" y="4.900" width="11.200" height="8.900" rx=".8" fill="url(#gl)" stroke="#a8690f" stroke-width=".8"/><rect x="3.200" y="5.600" width="9.600" height="1" fill="rgba(255,255,255,.35)"/><circle cx="8" cy="7.700" r="1.150" fill="#1b1b33"/><rect x="7.300" y="8" width="1.400" height="2.500" rx=".5" fill="#1b1b33"/></svg></div><div class="c " style="left:197px;width:82px">Function</div><div class="c n" style="left:279px;width:76px">0.440</div><div class="c n" style="left:355px;width:85px">1.515</div><div class="c r" style="left:440px;width:50px">0</div><div class="c r" style="left:490px;width:74px">11</div><div class="c b" style="left:564px;width:132px">print</div><div class="c n" style="left:696px;width:81px">004115d0</div><div class="c b" style="left:777px;width:128px">addPeople</div><div class="c n" style="left:905px;width:90px">004116f0</div><div class="c r" style="left:995px;width:72px">181</div><div class="c r" style="left:1067px;width:63px">152</div><div class="c " style="left:1130px;width:131px">Function Reference C...</div></div>
<div class="row rs" style="top:255px"><div class="c r" style="left:62px;width:68px">4</div><div class="c ctr" style="left:130px;width:67px"><svg class="ic lk" width="16" height="16" viewBox="0 0 16 16"><rect x="2.800" y="5.300" width="12" height="9.500" rx="1" fill="rgba(0,0,0,.28)"/><path d="M4.900 6V4.600a3.150 3.150 0 0 1 6.300 0V6" fill="none" stroke="#6e6e6e" stroke-width="3"/><path d="M4.900 6V4.600a3.150 3.150 0 0 1 6.300 0V6" fill="none" stroke="#ececec" stroke-width="1.300"/><rect x="2.400" y="4.900" width="11.200" height="8.900" rx=".8" fill="url(#gl)" stroke="#a8690f" stroke-width=".8"/><rect x="3.200" y="5.600" width="9.600" height="1" fill="rgba(255,255,255,.35)"/><circle cx="8" cy="7.700" r="1.150" fill="#1b1b33"/><rect x="7.300" y="8" width="1.400" height="2.500" rx=".5" fill="#1b1b33"/></svg></div><div class="c " style="left:197px;width:82px">Function</div><div class="c n" style="left:279px;width:76px">0.502</div><div class="c n" style="left:355px;width:85px">1.515</div><div class="c r" style="left:440px;width:50px">0</div><div class="c r" style="left:490px;width:74px">11</div><div class="c b" style="left:564px;width:132px">print</div><div class="c n" style="left:696px;width:81px">004115d0</div><div class="c b" style="left:777px;width:128px">addPerson</div><div class="c n" style="left:905px;width:90px">00411830</div><div class="c r" style="left:995px;width:72px">181</div><div class="c r" style="left:1067px;width:63px">115</div><div class="c " style="left:1130px;width:131px">Function Reference C...</div></div>
<div class="row rs" style="top:272px"><div class="c r" style="left:62px;width:68px">4</div><div class="c ctr" style="left:130px;width:67px"><svg class="ic lk" width="16" height="16" viewBox="0 0 16 16"><rect x="2.800" y="5.300" width="12" height="9.500" rx="1" fill="rgba(0,0,0,.28)"/><path d="M4.900 6V4.600a3.150 3.150 0 0 1 6.300 0V6" fill="none" stroke="#6e6e6e" stroke-width="3"/><path d="M4.900 6V4.600a3.150 3.150 0 0 1 6.300 0V6" fill="none" stroke="#ececec" stroke-width="1.300"/><rect x="2.400" y="4.900" width="11.200" height="8.900" rx=".8" fill="url(#gl)" stroke="#a8690f" stroke-width=".8"/><rect x="3.200" y="5.600" width="9.600" height="1" fill="rgba(255,255,255,.35)"/><circle cx="8" cy="7.700" r="1.150" fill="#1b1b33"/><rect x="7.300" y="8" width="1.400" height="2.500" rx=".5" fill="#1b1b33"/></svg></div><div class="c " style="left:197px;width:82px">Function</div><div class="c n" style="left:279px;width:76px">0.468</div><div class="c n" style="left:355px;width:85px">1.515</div><div class="c r" style="left:440px;width:50px">0</div><div class="c r" style="left:490px;width:74px">11</div><div class="c b" style="left:564px;width:132px">print</div><div class="c n" style="left:696px;width:81px">004115d0</div><div class="c b" style="left:777px;width:128px">main</div><div class="c n" style="left:905px;width:90px">00411a10</div><div class="c r" style="left:995px;width:72px">181</div><div class="c r" style="left:1067px;width:63px">95</div><div class="c " style="left:1130px;width:131px">Function Reference C...</div></div>
<div class="row rs" style="top:289px"><div class="c r" style="left:62px;width:68px">4</div><div class="c ctr" style="left:130px;width:67px"><svg class="ic lk" width="16" height="16" viewBox="0 0 16 16"><rect x="2.800" y="5.300" width="12" height="9.500" rx="1" fill="rgba(0,0,0,.28)"/><path d="M4.900 6V4.600a3.150 3.150 0 0 1 6.300 0V6" fill="none" stroke="#6e6e6e" stroke-width="3"/><path d="M4.900 6V4.600a3.150 3.150 0 0 1 6.300 0V6" fill="none" stroke="#ececec" stroke-width="1.300"/><rect x="2.400" y="4.900" width="11.200" height="8.900" rx=".8" fill="url(#gl)" stroke="#a8690f" stroke-width=".8"/><rect x="3.200" y="5.600" width="9.600" height="1" fill="rgba(255,255,255,.35)"/><circle cx="8" cy="7.700" r="1.150" fill="#1b1b33"/><rect x="7.300" y="8" width="1.400" height="2.500" rx=".5" fill="#1b1b33"/></svg></div><div class="c " style="left:197px;width:82px">Function</div><div class="c n" style="left:279px;width:76px">0.392</div><div class="c n" style="left:355px;width:85px">1.515</div><div class="c r" style="left:440px;width:50px">0</div><div class="c r" style="left:490px;width:74px">11</div><div class="c b foc" style="left:564px;width:132px">print</div><div class="c n" style="left:696px;width:81px">004115d0</div><div class="c b" style="left:777px;width:128px"><span style="position:static;letter-spacing:0.08px">FUN_004118c0</span></div><div class="c n" style="left:905px;width:90px">004118c0</div><div class="c r" style="left:995px;width:72px">181</div><div class="c r" style="left:1067px;width:63px">261</div><div class="c " style="left:1130px;width:131px">Function Reference C...</div></div>
<div class="row rw" style="top:306px"><div class="c r" style="left:62px;width:68px">3</div><div class="c ctr" style="left:130px;width:67px"><svg class="ic" width="16" height="16" viewBox="0 0 16 16"><rect x="0" y="0" width="1.100" height="15.500" fill="#2a2a2a"/><path d="M1.100 1.800C4.500 3.200 8 3.300 12 3.200L8.300 5.400 12 6.600C8 7.300 4.500 7.800 1.100 9z" fill="url(#gf)"/><path d="M7 5.900l2.300-.9 2.700 1.600c-1.800.3-3.400.5-5 .8z" fill="#1e8a1a" opacity=".55"/><rect x="1.100" y="15" width="7" height=".6" fill="rgba(0,0,0,.18)"/><path d="M11.500 8.200c.4 0 .6.200.8.600l2.800 5.800c.2.500 0 .9-.6.900h-6c-.6 0-.8-.4-.6-.9l2.800-5.800c.2-.4.400-.6.800-.6z" fill="#f6b545" stroke="#e09a28" stroke-width=".5"/><path d="M11.500 9.400l2.300 5h-4.600z" fill="#fbd58a"/><rect x="11" y="10.400" width="1" height="2.600" fill="#4a2a00"/><rect x="11" y="13.600" width="1" height="1.100" fill="#4a2a00"/></svg></div><div class="c " style="left:197px;width:82px">Function</div><div class="c n" style="left:279px;width:76px">0.933</div><div class="c n" style="left:355px;width:85px">1.982</div><div class="c r" style="left:440px;width:50px">0</div><div class="c r" style="left:490px;width:74px">2</div><div class="c b" style="left:564px;width:132px"><span style="position:static;letter-spacing:0.23px">@_RTC_CheckStack...</span></div><div class="c n" style="left:696px;width:81px">00411c70</div><div class="c b" style="left:777px;width:128px"><span style="position:static;letter-spacing:0.23px">@_RTC_CheckStac...</span></div><div class="c n" style="left:905px;width:90px">00411c50</div><div class="c r" style="left:995px;width:72px">212</div><div class="c r" style="left:1067px;width:63px">212</div><div class="c " style="left:1130px;width:131px">Function Reference C...</div></div>
<div class="row ra" style="top:323px"><div class="c r" style="left:62px;width:68px">3</div><div class="c ctr" style="left:130px;width:67px"><svg class="ic" width="16" height="16" viewBox="0 0 16 16"><rect x="0" y="0" width="1.100" height="15.500" fill="#2a2a2a"/><path d="M1.100 1.800C4.500 3.200 8 3.300 12 3.200L8.300 5.400 12 6.600C8 7.300 4.500 7.800 1.100 9z" fill="url(#gf)"/><path d="M7 5.900l2.300-.9 2.700 1.600c-1.800.3-3.400.5-5 .8z" fill="#1e8a1a" opacity=".55"/><rect x="1.100" y="15" width="7" height=".6" fill="rgba(0,0,0,.18)"/></svg></div><div class="c " style="left:197px;width:82px">Function</div><div class="c n" style="left:279px;width:76px">1.000</div><div class="c n" style="left:355px;width:85px">1.648</div><div class="c r" style="left:440px;width:50px">0</div><div class="c r" style="left:490px;width:74px">2</div><div class="c b" style="left:564px;width:132px"><span style="position:static;letter-spacing:0.23px">@_RTC_CheckStack...</span></div><div class="c n" style="left:696px;width:81px">00411bb0</div><div class="c b" style="left:777px;width:128px"><span style="position:static;letter-spacing:0.23px">@_RTC_CheckStac...</span></div><div class="c n" style="left:905px;width:90px">00411b90</div><div class="c r" style="left:995px;width:72px">93</div><div class="c r" style="left:1067px;width:63px">93</div><div class="c " style="left:1130px;width:131px">Function Reference C...</div></div>
  </div>
  <div class="vs">
   <svg style="left:6px;top:7px" width="7" height="4" viewBox="0 0 7 4"><linearGradient id="ga" x1="0" y1="0" x2="1" y2="0"><stop offset="0" stop-color="#222"/><stop offset="1" stop-color="#9a9a9a"/></linearGradient><path d="M0 4L3.500 0 7 4z" fill="url(#ga)"/></svg>
   <svg style="left:6px;top:321px" width="7" height="4" viewBox="0 0 7 4"><path d="M0 0L3.500 4 7 0z" fill="url(#ga)"/></svg>
   <div style="left:1px;top:81px;width:15px;height:20px;border:1px solid #979797;border-radius:2.500px;background:linear-gradient(90deg,#f5f5f5 0,#ededed 7px,#dedede 8px,#d2d2d2 15px);box-shadow:inset 0 0 0 1px rgba(255,255,255,.75)"></div>
   <div style="left:5px;top:87px;width:8px;height:1px;background:linear-gradient(90deg,#333,#999);box-shadow:0 1px 0 rgba(255,255,255,.7)"></div>
   <div style="left:5px;top:90px;width:8px;height:1px;background:linear-gradient(90deg,#333,#999);box-shadow:0 1px 0 rgba(255,255,255,.7)"></div>
   <div style="left:5px;top:93px;width:8px;height:1px;background:linear-gradient(90deg,#333,#999);box-shadow:0 1px 0 rgba(255,255,255,.7)"></div>
  </div>
  <!-- filter panel -->
  <div style="left:11px;top:458px;width:1278px;height:1px;background:#a2a6ac"></div>
  <div class="bevl" style="left:10px;top:458px;width:711px;height:27px"></div>
  <div class="lbl" style="left:16px;letter-spacing:.3px">Filter:</div>
  <div class="inp" style="left:48px;width:666px"></div>
  <div class="bevl" style="left:725px;top:458px;width:174px;height:27px"></div>
  <div class="lbl" style="left:731px">Score Filter:</div>
  <div class="inp" style="left:797px;width:38px">0.000</div>
  <div class="lbl" style="left:839px">to</div>
  <div class="inp" style="left:853px;width:38px">1.000</div>
  <div class="bevl" style="left:902px;top:458px;width:202px;height:27px"></div>
  <div class="lbl" style="left:908px;letter-spacing:-.05px">Confidence Filter:</div>
  <div class="inp" style="left:1001px;width:38px;padding-right:3px">-9.999</div>
  <div class="lbl" style="left:1043px">to</div>
  <div class="inp" style="left:1057px;width:38px">9.999</div>
  <div class="bevl" style="left:1106px;top:458px;width:128px;height:27px"></div>
  <div class="lbl" style="left:1112px">Length Filter:</div>
  <div class="inp" style="left:1180px;width:46px">0</div>
  <div style="left:1238px;top:460px;width:47px;height:24px;border:1px solid #707070;border-radius:3px;background:linear-gradient(#f3f3f3 0,#ececec 11px,#dedede 12px,#d0d0d0 24px);box-shadow:inset 0 0 0 1px rgba(255,255,255,.8)"></div>
  <svg style="left:1253px;top:464px" width="17" height="17" viewBox="0 0 17 17"><path d="M1 3.500h6.500M5.500 1.500l2 2-2 2M9.500 1v5M1 13.500h6.500M5.500 11.500l2 2-2 2M9.500 11v5" fill="none" stroke="#4f6f8f" stroke-width="1"/><path d="M4.500 7.200h6.500v-2.200l4.500 3.500-4.500 3.500v-2.200h-6.500z" fill="#fdeebc" stroke="#d9a11f" stroke-width="1.100"/></svg>
  <!-- status -->
  <div class="l1" style="top:487px;height:2px;background:#fff"></div>
  <div class="l1" style="top:489px;background:#f6f6f6"></div>
  <div class="bevl" style="left:8px;top:490px;width:1284px;height:25px"></div>
 </div></div>
</div>
<div style="left:1247px;top:163px;width:60px;height:18px;background:#ffffe1;border:1px solid #000;line-height:18px;padding-left:6px;white-space:nowrap;font-size:12px;letter-spacing:.3px">Function</div>
</body></html>
